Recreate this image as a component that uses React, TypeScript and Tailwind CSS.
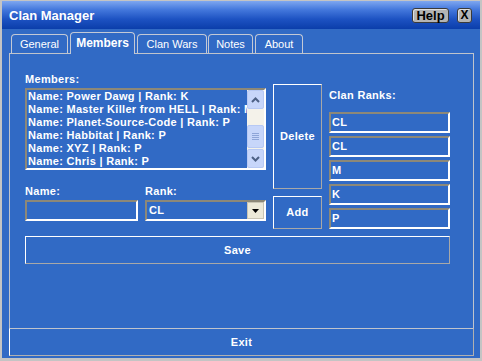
import React from 'react';

const TABS = [
  { label: 'General', w: 'w-[57px]', ml: 'ml-[2px]' },
  { label: 'Members', w: 'w-[65px]', ml: 'ml-[2px]', active: true },
  { label: 'Clan Wars', w: 'w-[70px]', ml: 'ml-[2px]' },
  { label: 'Notes', w: 'w-[45px]', ml: 'ml-px' },
  { label: 'About', w: 'w-[48px]', ml: 'ml-[2px]' }
];

const MEMBERS = [
  'Name: Power Dawg | Rank: K',
  'Name: Master Killer from HELL | Rank: M',
  'Name: Planet-Source-Code | Rank: P',
  'Name: Habbitat | Rank: P',
  'Name: XYZ | Rank: P',
  'Name: Chris | Rank: P'
];

const RANKS = ['CL', 'CL', 'M', 'K', 'P'];

function Arrow({ up }: { up?: boolean }) {
  return (
    <svg width="9" height="6" viewBox="0 0 9 6">
      <path d={up ? 'M1 5 L4.5 1.5 L8 5' : 'M1 1 L4.5 4.5 L8 1'} fill="none" stroke="#4d6185" strokeWidth="2" />
    </svg>
  );
}

function ScrollBtn({ up }: { up?: boolean }) {
  return (
    <div className="h-[19px] rounded-[2px] border border-[#b7c9f4] bg-[#c7d6fa] flex items-center justify-center">
      <Arrow up={up} />
    </div>
  );
}

export default function App() {
  return (
    <div className="w-[482px] h-[361px] bg-[#c4c4c4] pt-px pl-[2px] pr-[2px] pb-[3px] flex flex-col font-['Liberation_Sans',Arial,sans-serif] text-[11px] text-white">
      {/* title bar */}
      <div className="h-[28px] flex items-center justify-between pl-[7px] pr-[8px] bg-[linear-gradient(to_bottom,#7ea7f0_0%,#4579dd_30%,#1d52c2_65%,#0b3eaa_100%)]">
        <span className="text-[13px] font-bold leading-none">Clan Manager</span>
        <div className="flex items-center gap-[8px]">
          <button className="w-[37px] h-[15px] rounded-[3px] border border-[#3a3a3a] bg-[#b4b4b4] text-black text-[13px] font-bold leading-none flex items-center justify-center shadow-[inset_1px_1px_0_#e0e0e0]">
            Help
          </button>
          <button className="w-[15px] h-[15px] rounded-[3px] border border-[#3a3a3a] bg-[#b4b4b4] text-black text-[12px] font-bold leading-none flex items-center justify-center shadow-[inset_1px_1px_0_#e0e0e0]">
            X
          </button>
        </div>
      </div>

      {/* body */}
      <div className="flex-1 bg-[#316ac5] pt-[3px] pl-[7px] pr-[6px] pb-[2px] flex flex-col">
        <div className="h-[21px] flex items-end">
          {TABS.map((t) =>
            t.active ? (
              <div
                key={t.label}
                className={`${t.w} ${t.ml} h-[22px] -mb-px relative z-10 bg-[#316ac5] border border-b-0 border-[#c3c9d6] rounded-t-[4px] flex items-center justify-center font-bold text-[12px] pb-[2px]`}
              >
                {t.label}
              </div>
            ) : (
              <div
                key={t.label}
                className={`${t.w} ${t.ml} h-[19px] border border-b-0 border-[#c3c9d6] rounded-t-[4px] flex items-center justify-center`}
              >
                {t.label}
              </div>
            )
          )}
        </div>

        {/* tab panel */}
        <div className="h-[275px] border border-b-0 border-[#c0c4cc] pl-[15px] pt-[19px] font-bold tracking-[0.3px]">
          <div className="flex items-start">
            {/* left column */}
            <div className="w-[241px] flex flex-col">
              <div className="h-[13px] leading-[13px]">Members:</div>
              <div className="mt-[2px] h-[82px] border-2 border-t-[#8c8878] border-l-[#8c8878] border-b-white border-r-white flex">
                <div className="flex-1 overflow-hidden pl-px">
                  {MEMBERS.map((m) => (
                    <div key={m} className="h-[13px] leading-[13px] whitespace-nowrap">
                      {m}
                    </div>
                  ))}
                </div>
                <div className="w-[17px] bg-[#f4f2ea] flex flex-col">
                  <ScrollBtn up />
                  <div className="flex-1 flex flex-col pt-[16px]">
                    <div className="h-[23px] rounded-[2px] border border-[#b7c9f4] bg-[#c7d6fa] flex flex-col items-center justify-center gap-px">
                      <div className="w-[7px] h-px bg-[#8ea5d8]" />
                      <div className="w-[7px] h-px bg-[#8ea5d8]" />
                      <div className="w-[7px] h-px bg-[#8ea5d8]" />
                      <div className="w-[7px] h-px bg-[#8ea5d8]" />
                    </div>
                  </div>
                  <ScrollBtn />
                </div>
              </div>

              <div className="mt-[15px] flex gap-[7px]">
                <div className="w-[113px]">
                  <div className="h-[13px] leading-[13px]">Name:</div>
                  <div className="mt-[2px] h-[21px] border-2 border-t-[#8c8878] border-l-[#8c8878] border-b-white border-r-white" />
                </div>
                <div className="w-[121px]">
                  <div className="h-[13px] leading-[13px]">Rank:</div>
                  <div className="mt-[2px] h-[21px] border-2 border-t-[#8c8878] border-l-[#8c8878] border-b-white border-r-white flex items-center pl-[2px]">
                    <span className="flex-1">CL</span>
                    <div className="w-[17px] h-[17px] bg-[#ece9d8] border border-[#c8c4b4] flex items-center justify-center">
                      <svg width="7" height="4" viewBox="0 0 7 4">
                        <path d="M0 0 H7 L3.5 4 Z" fill="#000" />
                      </svg>
                    </div>
                  </div>
                </div>
              </div>
            </div>

            {/* middle column */}
            <div className="ml-[7px] w-[49px] mt-[11px] flex flex-col">
              <button className="h-[105px] border border-t-white border-l-white border-b-[#a8a8a8] border-r-[#a8a8a8] flex items-center justify-center font-bold text-[11px] tracking-[0.3px]">
                Delete
              </button>
              <button className="mt-[7px] h-[33px] border border-t-white border-l-white border-b-[#a8a8a8] border-r-[#a8a8a8] flex items-center justify-center font-bold text-[11px] tracking-[0.3px]">
                Add
              </button>
            </div>

            {/* right column */}
            <div className="ml-[7px] w-[121px] mt-[16px] flex flex-col">
              <div className="h-[13px] leading-[13px]">Clan Ranks:</div>
              <div className="mt-[10px] flex flex-col gap-[3px]">
                {RANKS.map((r, i) => (
                  <div
                    key={i}
                    className="h-[21px] border-2 border-t-[#8c8878] border-l-[#8c8878] border-b-white border-r-white flex items-center pl-px"
                  >
                    {r}
                  </div>
                ))}
              </div>
            </div>
          </div>

          <button className="mt-[7px] w-[425px] h-[28px] border border-t-white border-l-white border-b-[#a8a8a8] border-r-[#a8a8a8] flex items-center justify-center font-bold text-[11px] tracking-[0.3px]">
            Save
          </button>
        </div>

        {/* exit */}
        <button className="h-[28px] border border-t-[#c0c4cc] border-l-white border-b-[#b0b0b0] border-r-[#b0b0b0] flex items-center justify-center font-bold tracking-[0.3px]">
          Exit
        </button>
      </div>
    </div>
  );
}
